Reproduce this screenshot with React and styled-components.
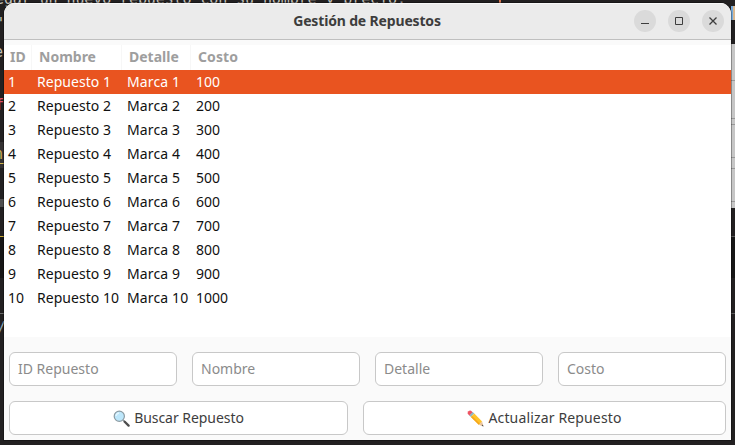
import React from "react";
import styled, { createGlobalStyle } from "styled-components";

const GlobalStyle = createGlobalStyle`
  * { box-sizing: border-box; }
  html, body { margin: 0; height: 100%; overflow: hidden; }
  body { background: #222021; font-family: "Noto Sans", sans-serif; }
`;

const Desktop = styled.div`
  position: relative;
  width: 735px;
  height: 445px;
  padding: 3px 4px 5px;
  overflow: hidden;
  background: #222021;
`;

const CodeText = styled.span`
  position: absolute;
  left: ${(p) => p.$x}px;
  top: ${(p) => p.$y}px;
  color: ${(p) => p.$color || "#c4c0ba"};
  font: 15px/18px "DejaVu Sans Mono", monospace;
  letter-spacing: -0.1px;
  white-space: pre;
`;

const Patch = styled.div`
  position: absolute;
  left: ${(p) => p.$x}px;
  top: ${(p) => p.$y}px;
  width: ${(p) => p.$w}px;
  height: ${(p) => p.$h}px;
  background: ${(p) => p.$color};
`;

const Window = styled.main`
  position: relative;
  width: 727px;
  height: 437px;
  display: flex;
  flex-direction: column;
  overflow: hidden;
  border-radius: 11px 11px 0 0;
  background: #fafafa;
  box-shadow: 0 0 0 1px rgba(0, 0, 0, 0.3);
`;

const TitleBar = styled.header`
  flex: none;
  height: 37px;
  display: grid;
  grid-template-columns: 1fr auto 1fr;
  align-items: center;
  padding: 0 7px 0 0;
  background: #ebebeb;
  border-bottom: 1px solid #bfbfbf;
  box-shadow: inset 0 1px #f8f8f8;
`;

const Title = styled.h1`
  grid-column: 2;
  margin: 0 0 0 6px;
  color: #3d3d3d;
  font-size: 14px;
  line-height: 20px;
  font-weight: 700;
  letter-spacing: -0.16px;
  white-space: nowrap;
`;

const Controls = styled.div`
  display: flex;
  justify-content: flex-end;
  gap: 12px;
`;

const ControlButton = styled.button`
  width: 22px;
  height: 22px;
  padding: 0;
  display: grid;
  place-items: center;
  border: 0;
  border-radius: 50%;
  background: #dadada;
  color: #3d3d3d;
  svg { display: block; }
`;

const TableView = styled.section`
  flex: none;
  height: 292px;
  margin-top: 5px;
  background: #fff;
`;

const Row = styled.div`
  display: grid;
  grid-template-columns: 28px 90px 69px 1fr;
  height: ${(p) => (p.$header ? 25 : 24)}px;
  background: ${(p) => (p.$selected ? "#e95420" : "#fff")};
  color: ${(p) => (p.$selected ? "#fff" : "#111")};
`;

const HeaderCell = styled.div`
  padding-left: ${(p) => (p.$first ? 6 : 7)}px;
  border-right: ${(p) => (p.$last ? "0" : "1px solid #f7f7f7")};
  color: #9e9e9e;
  font-size: 14px;
  line-height: 24px;
  font-weight: 700;
  letter-spacing: ${(p) => p.$track || 0}px;
`;

const Cell = styled.div`
  padding-left: ${(p) => p.$pad || 5}px;
  font-size: 14px;
  line-height: 24px;
  letter-spacing: ${(p) => p.$track || 0}px;
  white-space: nowrap;
`;

const Fields = styled.div`
  display: grid;
  grid-template-columns: repeat(4, 168px);
  gap: 15px;
  margin: 15px 5px 0;
`;

const Field = styled.input`
  width: 100%;
  height: 34px;
  padding: 0 8px 2px;
  border: 1px solid #c8c8c8;
  border-radius: 6px;
  background: #fff;
  outline: none;
  font: 14px "Noto Sans", sans-serif;
  &::placeholder { color: #8b8b8b; opacity: 1; }
`;

const Actions = styled.div`
  display: grid;
  grid-template-columns: 339px 363px;
  gap: 15px;
  margin: 15px 5px 0;
`;

const ActionButton = styled.button`
  height: 34px;
  padding: 0;
  display: flex;
  align-items: center;
  justify-content: center;
  gap: 4px;
  border: 1px solid #c8c8c8;
  border-radius: 6px;
  background: #fff;
  color: #3d3d3d;
  font: 14px "Noto Sans", sans-serif;
  letter-spacing: ${(p) => p.$track || 0}px;
  svg { flex: none; }
`;

const ActionLabel = styled.span`
  padding-bottom: 2px;
`;

const SearchIcon = () => (
  <svg width="17" height="17" viewBox="0 0 17 17">
    <path d="M10 10l2 2" stroke="#8b9398" strokeWidth="1.6" />
    <path d="M11.7 11.7l3.9 3.9" stroke="#4d4d4d" strokeWidth="2.3" strokeLinecap="round" />
    <circle cx="6.3" cy="6.2" r="5.1" fill="#bde7fb" stroke="#8b9ba3" strokeWidth="1.2" />
    <path d="M3 6a3.6 3.6 0 0 1 3-3" fill="none" stroke="#e3f6ff" strokeWidth="1.4" />
  </svg>
);

const PencilIcon = () => (
  <svg width="17" height="17" viewBox="0 0 17 17">
    <path d="M.7 3.8Q.2 2.4 1.5 1.2T4 .7l2 1.8L2.6 5.8z" fill="#ef5362" />
    <path d="M2.3 5.5L5.7 2.1l1.6 1.5-3.4 3.5z" fill="#90b7c5" />
    <path d="M3.9 7.1l3.4-3.5 7.8 7.8-3.3 3.4z" fill="#ffc329" />
    <path d="M3.9 7.1l1.2-1.2 7.8 7.8-1.1 1.1z" fill="#f5a51b" />
    <path d="M11.8 14.8l3.3-3.4 1.3 5z" fill="#eac299" />
    <path d="M14.7 15.8l1.2-1.2.6 2z" fill="#444" />
  </svg>
);

const items = Array.from({ length: 10 }, (_, i) => i + 1);

export default function App() {
  return (
    <>
      <GlobalStyle />
      <Desktop>
        <CodeText $x={-5} $y={-10}>egar un nuevo repuesto con su nombre y precio.</CodeText>
        <CodeText $x={-5} $y={15}>"</CodeText>
        <CodeText $x={-6} $y={43}>e</CodeText>
        <CodeText $x={-5} $y={96} $color="#e0526c">f</CodeText>
        <CodeText $x={-3} $y={319} $color="#8fa7b5">/</CodeText>
        <Patch $x={0} $y={142} $w={4} $h={26} $color="#343233" />
        <CodeText $x={-6} $y={145} $color="#c9ad55">n</CodeText>
        <Patch $x={0} $y={163} $w={4} $h={1} $color="#d0b450" />
        <Patch $x={0} $y={199} $w={4} $h={8} $color="#505050" />
        <Patch $x={0} $y={236} $w={4} $h={1} $color="#c9a832" />
        <Patch $x={0} $y={237} $w={4} $h={41} $color="#171616" />
        <Patch $x={0} $y={313} $w={4} $h={1} $color="#6a6a6a" />
        <Patch $x={499} $y={0} $w={2} $h={3} $color="#d4744f" />
        <Patch $x={731} $y={6} $w={2} $h={14} $color="#73a9db" />
        <Patch $x={733} $y={6} $w={2} $h={14} $color="#d9b890" />
        <Patch $x={731} $y={44} $w={4} $h={164} $color="#c6c6c6" />
        {[80, 118, 124, 157, 168, 201].map((y) => (
          <Patch key={y} $x={731} $y={y} $w={4} $h={1} $color="#999" />
        ))}
        <Patch $x={731} $y={236} $w={4} $h={1} $color="#5a5a5a" />
        <Patch $x={731} $y={237} $w={4} $h={41} $color="#161616" />
        <Patch $x={731} $y={313} $w={4} $h={1} $color="#5a5a5a" />
        <Window>
          <TitleBar>
            <Title>Gestión de Repuestos</Title>
            <Controls>
              <ControlButton aria-label="Minimizar">
                <svg width="8" height="8"><path d="M0 6.5h8" stroke="currentColor" /></svg>
              </ControlButton>
              <ControlButton aria-label="Maximizar">
                <svg width="8" height="8"><path d="M.5.5h7v7h-7z" fill="none" stroke="currentColor" /></svg>
              </ControlButton>
              <ControlButton aria-label="Cerrar">
                <svg width="8" height="8"><path d="M.5.5l7 7m0-7l-7 7" stroke="currentColor" strokeWidth="1.3" /></svg>
              </ControlButton>
            </Controls>
          </TitleBar>
          <TableView>
            <Row $header>
              <HeaderCell $first>ID</HeaderCell>
              <HeaderCell>Nombre</HeaderCell>
              <HeaderCell>Detalle</HeaderCell>
              <HeaderCell $last $track={0.1}>Costo</HeaderCell>
            </Row>
            {items.map((n) => (
              <Row key={n} $selected={n === 1}>
                <Cell $pad={4}>{n}</Cell>
                <Cell $track={0.04}>Repuesto {n}</Cell>
                <Cell $track={0.12}>Marca {n}</Cell>
                <Cell>{n * 100}</Cell>
              </Row>
            ))}
          </TableView>
          <Fields>
            {["ID Repuesto", "Nombre", "Detalle", "Costo"].map((label) => (
              <Field key={label} placeholder={label} />
            ))}
          </Fields>
          <Actions>
            <ActionButton $track={-0.05}><SearchIcon /><ActionLabel>Buscar Repuesto</ActionLabel></ActionButton>
            <ActionButton $track={0.15}><PencilIcon /><ActionLabel>Actualizar Repuesto</ActionLabel></ActionButton>
          </Actions>
        </Window>
      </Desktop>
    </>
  );
}
